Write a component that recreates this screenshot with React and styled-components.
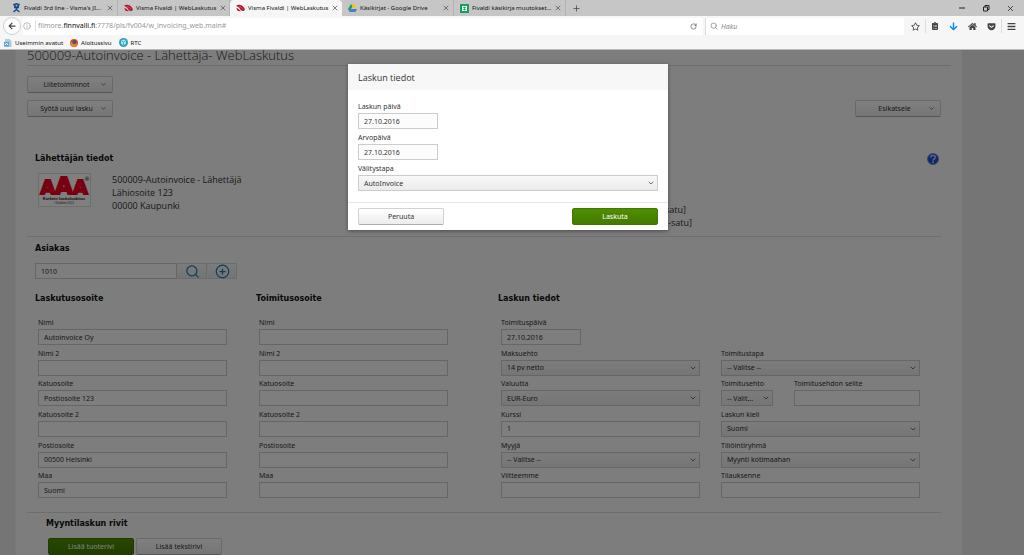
import React from "react";
import styled, { createGlobalStyle, css } from "styled-components";
import {
  FaArrowDown,
  FaArrowLeft,
  FaBars,
  FaClipboardList,
  FaGetPocket,
  FaHome,
  FaRegStar,
} from "react-icons/fa";
import { ChevronDown, CirclePlus, Info, Plus, RotateCw, Search, X } from "lucide-react";

const GlobalStyle = createGlobalStyle`
  * {
    box-sizing: border-box;
  }
  body {
    margin: 0;
    color: #333;
    font-family: "Open Sans", "Noto Sans", sans-serif;
    font-size: 8px;
  }
  button, input, select {
    margin: 0;
    font: inherit;
    color: inherit;
  }
  svg {
    display: block;
    flex: none;
  }
`;

const smallText = css`
  font-family: "Noto Sans", "Open Sans", sans-serif;
  font-size: 7px;
`;

/* browser */

const Window = styled.div`
  display: flex;
  flex-direction: column;
  height: 100vh;
  overflow: hidden;
`;

const TabStrip = styled.div`
  display: flex;
  align-items: stretch;
  height: 16px;
  padding-left: 6px;
  background: #c6c6c6;
  font-family: "Noto Sans", sans-serif;
  font-size: 6px;
  color: #111;
`;

const Tab = styled.div`
  display: flex;
  align-items: center;
  gap: 3px;
  width: 112px;
  padding: 0 3px 0 6px;
  border-right: 1px solid ${(p) => (p.$active ? "#f6f6f6" : "#b2b2b2")};
  ${(p) =>
    p.$active &&
    css`
      background: #f6f6f6;
      border-radius: 4px 4px 0 0;
    `}
`;

const TabTitle = styled.span`
  flex: 1;
  white-space: nowrap;
`;

const BareButton = styled.button`
  display: flex;
  align-items: center;
  justify-content: center;
  padding: 0;
  border: 0;
  background: none;
  color: ${(p) => p.$color || "#444"};
`;

const NewTab = styled(BareButton)`
  width: 20px;
`;

const WindowButtons = styled.div`
  display: flex;
  gap: 16px;
  margin-left: auto;
  padding-right: 9px;
`;

const Toolbar = styled.div`
  display: flex;
  align-items: center;
  gap: 2px;
  height: 20px;
  padding: 0 8px 0 3px;
  background: #f6f6f6;
`;

const BackButton = styled(BareButton)`
  width: 18px;
  height: 18px;
  border: 1px solid #d0d0d0;
  border-radius: 50%;
  background: #fcfcfc;
`;

const AddressBar = styled.div`
  display: flex;
  flex: 1;
  align-items: center;
  gap: 4px;
  height: 17px;
  padding-right: 6px;
  background: #fff;
`;

const Address = styled.span`
  flex: 1;
  padding-left: 2px;
  border-left: 1px solid #ddd;
  ${smallText}
  line-height: 10px;
  color: #999;
  b {
    font-weight: 400;
    color: #111;
  }
`;

const SearchBar = styled.label`
  display: flex;
  align-items: center;
  gap: 3px;
  width: 199px;
  height: 17px;
  padding-left: 4px;
  border-left: 1px solid #ddd;
  background: #fff;
  color: #777;
`;

const SearchInput = styled.input`
  width: 100%;
  padding: 0;
  border: 0;
  background: none;
  ${smallText}
  font-style: italic;
  &::placeholder {
    color: #888;
  }
`;

const Tools = styled.div`
  display: flex;
  align-items: center;
  gap: 10px;
  padding-left: 5px;
`;

const Divider = styled.span`
  width: 1px;
  height: 14px;
  margin: 0 -5px;
  background: #ddd;
`;

const Bookmarks = styled.nav`
  display: flex;
  gap: 7px;
  height: 14px;
  padding: 0 4px;
  border-bottom: 1px solid #bbb;
  background: #f6f6f6;
  font-family: "Noto Sans", sans-serif;
  font-size: 6px;
`;

const Bookmark = styled.a`
  display: flex;
  align-items: center;
  gap: 3px;
  color: #111;
  text-decoration: none;
`;

/* page */

const Viewport = styled.div`
  position: relative;
  flex: 1;
  min-height: 0;
  overflow: hidden;
  padding: 0 62px 0 15px;
  background: #ebebeb;
`;

const Sheet = styled.main`
  min-height: 100%;
  padding: 0 21px 0 11px;
  border-left: 1px solid #f2f2f2;
  background: #fafafa;
`;

const PageTitle = styled.h1`
  margin: 0 -10px 10px 0;
  padding-bottom: 4px;
  border-bottom: 1px solid #dcdcdc;
  font-size: 13px;
  font-weight: 300;
  line-height: 11px;
`;

const ButtonRow = styled.div`
  display: flex;
  justify-content: space-between;
  margin-bottom: 7px;
`;

const Button = styled.button`
  display: flex;
  align-items: center;
  justify-content: center;
  width: 86px;
  height: 17px;
  padding: 0 5px;
  border: 1px solid #d2d2d2;
  border-bottom-color: #aaa;
  border-radius: 2px;
  background: linear-gradient(#fff, #ececec);
  ${smallText}
  span {
    flex: 1;
  }
  ${(p) =>
    p.$primary &&
    css`
      border-color: #417505;
      background: linear-gradient(#4f8f00, #437a00);
      color: #fff;
    `}
`;

const Section = styled.section`
  padding: ${(p) => p.$pad || "0 8px"};
  border-bottom: 1px solid #dcdcdc;
`;

const Heading = styled.h2`
  margin: 0;
  font-family: "DejaVu Sans", sans-serif;
  font-size: 8px;
  font-weight: bold;
  line-height: 12px;
  color: #111;
`;

const SectionTop = styled.div`
  display: flex;
  align-items: center;
  justify-content: space-between;
  height: 16px;
  padding-right: 2px;
`;

const Sender = styled.div`
  display: flex;
  gap: 21px;
  padding: 6px 0 7px 3px;
`;

const SenderAddress = styled.p`
  flex: 1;
  margin: 0;
  font-size: 9px;
  line-height: 13px;
`;

const Reference = styled.p`
  width: 273px;
  margin: 0;
  padding-top: 30px;
  font-size: 9px;
  line-height: 13px;
  text-indent: -3px;
`;

const CustomerSearch = styled.div`
  display: flex;
  margin: 8px 0 14px;
  width: 202px;
`;

const IconButton = styled.button`
  display: flex;
  flex: none;
  align-items: center;
  justify-content: center;
  width: 30px;
  height: 16px;
  padding: 0;
  border: 1px solid #d8d8d8;
  border-left-color: #eee;
  background: linear-gradient(#f4f8fb, #e4eaee);
  color: #1f78ac;
`;

const Columns = styled.div`
  display: grid;
  grid-template-columns: 221fr 242fr 443fr;
`;

const FieldGrid = styled.div`
  display: grid;
  grid-template-columns: repeat(${(p) => p.$cols || 1}, 1fr);
  grid-template-rows: repeat(6, 1fr);
  grid-auto-flow: column;
  column-gap: 21px;
  height: 184px;
  margin-top: 11px;
  padding: 0 ${(p) => p.$right}px 0 3px;
`;

const Field = styled.div`
  display: flex;
  flex: ${(p) => p.$flex || "none"};
  flex-direction: column;
  width: ${(p) => p.$width || "auto"};
  min-width: 0;
`;

const Pair = styled.div`
  display: flex;
  gap: 21px;
`;

const Label = styled.label`
  ${smallText}
  line-height: 13px;
  white-space: nowrap;
`;

const controlStyle = css`
  width: 100%;
  height: 16px;
  padding: 0 5px;
  border: 1px solid #ccc;
  border-radius: 0;
  outline: 0;
  ${smallText}
`;

const Input = styled.input`
  ${controlStyle}
  background: #fcfcfc;
`;

const SelectBox = styled.div`
  display: grid;
  align-items: center;
  > * {
    grid-area: 1 / 1;
  }
  svg {
    justify-self: end;
    margin-right: 3px;
    pointer-events: none;
  }
`;

const StyledSelect = styled.select`
  ${controlStyle}
  appearance: none;
  background: linear-gradient(#f8f8f8, #ebebeb);
`;

const Rows = styled.section`
  padding: 5px 0 0 19px;
`;

const RowButtons = styled.div`
  display: flex;
  gap: 2px;
  padding: 8px 0 0 2px;
`;

/* dialog */

const Overlay = styled.div`
  position: absolute;
  inset: 0;
  display: flex;
  align-items: flex-start;
  justify-content: center;
  padding: 14px 8px 0 0;
  background: rgba(0, 0, 0, 0.5);
`;

const Dialog = styled.div`
  width: 320px;
  background: #fff;
  box-shadow: 0 1px 4px rgba(0, 0, 0, 0.4);
`;

const DialogTitle = styled.h2`
  margin: 0;
  padding: 1px 10px 0;
  background: #f7f7f7;
  font-size: 9px;
  font-weight: 400;
  line-height: 25px;
`;

const DialogBody = styled.div`
  display: flex;
  flex-direction: column;
  gap: 2px;
  padding: 10px 10px 11px;
`;

const DialogFooter = styled.div`
  display: flex;
  justify-content: space-between;
  padding: 5px 10px;
  border-top: 1px solid #e8e8e8;
`;

function TextField({ id, label, value = "", width, flex }) {
  return (
    <Field $width={width} $flex={flex}>
      <Label htmlFor={id}>{label}</Label>
      <Input id={id} defaultValue={value} />
    </Field>
  );
}

function SelectField({ id, label, value, width }) {
  return (
    <Field $width={width}>
      <Label htmlFor={id}>{label}</Label>
      <SelectBox>
        <StyledSelect id={id}>
          <option>{value}</option>
        </StyledSelect>
        <ChevronDown size={8} />
      </SelectBox>
    </Field>
  );
}

function MenuButton({ children }) {
  return (
    <Button type="button">
      <span>{children}</span>
      <ChevronDown size={7} />
    </Button>
  );
}

function JiraIcon() {
  return (
    <svg width="9" height="10" viewBox="0 0 18 20">
      <path d="M3 2l4 5h4l4-5M4 9h10M9 9v5M3 18l6-5 6 5" stroke="#174a85" strokeWidth="3" fill="none" />
      <circle cx="9" cy="5" r="5" fill="#174a85" />
      <circle cx="9" cy="5" r="2" fill="#8fb4dc" />
    </svg>
  );
}

function VismaIcon() {
  return (
    <svg width="9" height="8" viewBox="0 0 18 16">
      <path d="M0 4c4-4 11-3 15 2 4 4 3 8-1 8C8 14 9 6 0 4z" fill="#b3122c" />
      <path d="M1 8c4 0 5 5 9 6-4 2-9-1-9-6z" fill="#b3122c" />
      <path d="M6 5c4 0 6 3 8 6" stroke="#e8a0a8" strokeWidth="1" fill="none" />
    </svg>
  );
}

function DriveIcon() {
  return (
    <svg width="9" height="8" viewBox="0 0 18 16">
      <path d="M6 0h6l6 10h-6z" fill="#f9c513" />
      <path d="M6 0l3 5-6 11-3-6z" fill="#1ba15f" />
      <path d="M6 10h12l-3 6H3z" fill="#3c7ded" />
    </svg>
  );
}

function SheetsIcon() {
  return (
    <svg width="9" height="9" viewBox="0 0 18 18">
      <rect width="18" height="18" rx="1" fill="#12a05c" />
      <path d="M4 4h10v10H4z" fill="#fff" />
      <path d="M6 7h6M6 11h6M9 5v8" stroke="#12a05c" strokeWidth="1.5" />
    </svg>
  );
}

function BookmarkIcon({ kind }) {
  if (kind === "page") {
    return (
      <svg width="8" height="8" viewBox="0 0 16 16">
        <path d="M2 0h9l4 4v12H2z" fill="#a9cbe4" />
        <path d="M0 6h10v9H0z" fill="#5f9fce" />
        <path d="M2 12l3-4 3 4" stroke="#fff" strokeWidth="2" fill="none" />
      </svg>
    );
  }
  if (kind === "firefox") {
    return (
      <svg width="8" height="8" viewBox="0 0 16 16">
        <circle cx="8" cy="8" r="8" fill="#d9541e" />
        <circle cx="9" cy="6" r="4" fill="#35598f" />
        <path d="M1 5c3 1 3 6 8 6 3 0 4-2 5-4 1 6-3 9-7 8-4 0-7-5-6-10z" fill="#f08a24" />
      </svg>
    );
  }
  return (
    <svg width="9" height="9" viewBox="0 0 18 18">
      <circle cx="9" cy="9" r="9" fill="#2aa3bd" />
      <path d="M4 5l5-2 5 2v6l-5 4-5-4z" fill="#b9e6ee" />
      <path d="M4 5l5 3 5-3M9 8v7" stroke="#2aa3bd" strokeWidth="1.5" fill="none" />
    </svg>
  );
}

function AaaLogo() {
  return (
    <svg width="53" height="34" viewBox="0 0 53 34">
      <rect x=".5" y=".5" width="52" height="33" fill="#fff" stroke="#ddd" />
      <text
        x="26"
        y="21"
        fontSize="19"
        fill="#f00020"
        stroke="#f00020"
        strokeWidth="2"
        fontFamily="DejaVu Sans"
        fontWeight="bold"
        textAnchor="middle"
      >
        A<tspan fontSize="23">A</tspan>A
      </text>
      <text x="46" y="8" fontSize="6" fontFamily="DejaVu Sans" fill="#222">®</text>
      <text x="26" y="27" fontSize="4" fontFamily="Liberation Sans" fontWeight="bold" textAnchor="middle" fill="#111">
        Korkein luottoluokitus
      </text>
      <text x="26" y="31" fontSize="3" fontFamily="Liberation Sans" textAnchor="middle" fill="#333">
        ©Soliditet 2011
      </text>
    </svg>
  );
}

function HelpIcon() {
  return (
    <svg width="12" height="12" viewBox="0 0 26 26">
      <circle cx="13" cy="13" r="12" fill="#1d50d8" stroke="#7f95c8" strokeWidth="2" />
      <path d="M8 10c0-7 11-6 10 0-1 3-5 3-5 7" stroke="#c8d4f4" strokeWidth="3" fill="none" />
      <circle cx="13" cy="20" r="2" fill="#c8d4f4" />
    </svg>
  );
}

const tabs = [
  { title: "Fivaldi 3rd line - Visma's JI...", icon: <JiraIcon /> },
  { title: "Visma Fivaldi | WebLaskutus", icon: <VismaIcon /> },
  { title: "Visma Fivaldi | WebLaskutus", icon: <VismaIcon />, active: true },
  { title: "Käsikirjat - Google Drive", icon: <DriveIcon /> },
  { title: "Fivaldi käsikirja muutokset...", icon: <SheetsIcon /> },
];

const addressLabels = ["Nimi", "Nimi 2", "Katuosoite", "Katuosoite 2", "Postiosoite", "Maa"];
const billing = ["Autoinvoice Oy", "", "Postiosoite 123", "", "00500 Helsinki", "Suomi"];

function Browser() {
  return (
    <header>
      <TabStrip>
        {tabs.map((tab, i) => (
          <Tab key={i} $active={tab.active}>
            {tab.icon}
            <TabTitle>{tab.title}</TabTitle>
            <BareButton type="button" aria-label="Sulje välilehti">
              <X size={8} />
            </BareButton>
          </Tab>
        ))}
        <NewTab type="button" aria-label="Uusi välilehti">
          <Plus size={9} />
        </NewTab>
        <WindowButtons>
          <BareButton type="button" aria-label="Pienennä">
            <svg width="8" height="8" viewBox="0 0 8 8">
              <path d="M1 4h6" stroke="#222" />
            </svg>
          </BareButton>
          <BareButton type="button" aria-label="Palauta">
            <svg width="8" height="8" viewBox="0 0 8 8">
              <path d="M1.500 3h4v4h-4zM3 3V1.500h4v4H5.500" stroke="#222" fill="none" />
            </svg>
          </BareButton>
          <BareButton type="button" aria-label="Sulje">
            <X size={9} color="#222" />
          </BareButton>
        </WindowButtons>
      </TabStrip>
      <Toolbar>
        <BackButton type="button" aria-label="Takaisin">
          <FaArrowLeft size={8} />
        </BackButton>
        <AddressBar>
          <Info size={8} color="#999" />
          <Address>
            filmore.<b>finnvalli.fi</b>:7778/pls/fv004/w_invoicing_web.main#
          </Address>
          <BareButton type="button" aria-label="Lataa uudelleen">
            <RotateCw size={7} />
          </BareButton>
        </AddressBar>
        <SearchBar>
          <Search size={8} />
          <SearchInput placeholder="Haku" aria-label="Haku" />
        </SearchBar>
        <Tools>
          <BareButton type="button" aria-label="Lisää kirjanmerkki">
            <FaRegStar size={9} />
          </BareButton>
          <Divider />
          <BareButton type="button" aria-label="Kirjanmerkit">
            <FaClipboardList size={8} />
          </BareButton>
          <BareButton type="button" aria-label="Lataukset" $color="#0a84ff">
            <FaArrowDown size={9} />
          </BareButton>
          <BareButton type="button" aria-label="Koti">
            <FaHome size={9} />
          </BareButton>
          <BareButton type="button" aria-label="Pocket">
            <FaGetPocket size={9} />
          </BareButton>
          <Divider />
          <BareButton type="button" aria-label="Valikko">
            <FaBars size={9} />
          </BareButton>
        </Tools>
      </Toolbar>
      <Bookmarks>
        <Bookmark href="#">
          <BookmarkIcon kind="page" />
          Useimmin avatut
        </Bookmark>
        <Bookmark href="#">
          <BookmarkIcon kind="firefox" />
          Aloitussivu
        </Bookmark>
        <Bookmark href="#">
          <BookmarkIcon kind="rtc" />
          RTC
        </Bookmark>
      </Bookmarks>
    </header>
  );
}

function InvoicePage() {
  return (
    <Sheet>
      <PageTitle>500009-Autoinvoice - Lähettäjä- WebLaskutus</PageTitle>
      <ButtonRow>
        <MenuButton>Liitetoiminnot</MenuButton>
      </ButtonRow>
      <ButtonRow>
        <MenuButton>Syötä uusi lasku</MenuButton>
        <MenuButton>Esikatsele</MenuButton>
      </ButtonRow>
      <Section $pad="27px 0 0 8px">
        <SectionTop>
          <Heading>Lähettäjän tiedot</Heading>
          <BareButton type="button" aria-label="Ohje">
            <HelpIcon />
          </BareButton>
        </SectionTop>
        <Sender>
          <AaaLogo />
          <SenderAddress>
            500009-Autoinvoice - Lähettäjä
            <br />
            Lähiosoite 123
            <br />
            00000 Kaupunki
          </SenderAddress>
          <Reference>
            satu]
            <br />
            -satu]
          </Reference>
        </Sender>
      </Section>
      <Section $pad="6px 0 12px 8px">
        <Heading>Asiakas</Heading>
        <CustomerSearch>
          <Input defaultValue="1010" aria-label="Asiakas" />
          <IconButton type="button" aria-label="Hae asiakas">
            <Search size={15} strokeWidth={2} />
          </IconButton>
          <IconButton type="button" aria-label="Lisää asiakas">
            <CirclePlus size={15} strokeWidth={2} />
          </IconButton>
        </CustomerSearch>
        <Columns>
          <div>
            <Heading>Laskutusosoite</Heading>
            <FieldGrid $right={29}>
              {addressLabels.map((label, i) => (
                <TextField key={label} id={`billing-${i}`} label={label} value={billing[i]} />
              ))}
            </FieldGrid>
          </div>
          <div>
            <Heading>Toimitusosoite</Heading>
            <FieldGrid $right={50}>
              {addressLabels.map((label, i) => (
                <TextField key={label} id={`delivery-${i}`} label={label} />
              ))}
            </FieldGrid>
          </div>
          <div>
            <Heading>Laskun tiedot</Heading>
            <FieldGrid $cols={2} $right={21}>
              <TextField id="delivery-date" label="Toimituspäivä" value="27.10.2016" width="80px" />
              <SelectField id="terms" label="Maksuehto" value="14 pv netto" />
              <SelectField id="currency" label="Valuutta" value="EUR-Euro" />
              <TextField id="rate" label="Kurssi" value="1" />
              <SelectField id="seller" label="Myyjä" value="-- Valitse --" />
              <TextField id="our-ref" label="Viitteemme" />
              <div />
              <SelectField id="delivery-method" label="Toimitustapa" value="-- Valitse --" />
              <Pair>
                <SelectField id="delivery-term" label="Toimitusehto" value="-- Valit..." width="52px" />
                <TextField id="term-text" label="Toimitusehdon selite" flex="1" />
              </Pair>
              <SelectField id="language" label="Laskun kieli" value="Suomi" />
              <SelectField id="posting" label="Tiliöintiryhmä" value="Myynti kotimaahan" />
              <TextField id="order" label="Tilauksenne" />
            </FieldGrid>
          </div>
        </Columns>
      </Section>
      <Rows>
        <Heading>Myyntilaskun rivit</Heading>
        <RowButtons>
          <Button type="button" $primary>
            Lisää tuoterivi
          </Button>
          <Button type="button">Lisää tekstirivi</Button>
        </RowButtons>
      </Rows>
    </Sheet>
  );
}

function InvoiceDialog() {
  return (
    <Overlay>
      <Dialog role="dialog" aria-labelledby="dialog-title">
        <DialogTitle id="dialog-title">Laskun tiedot</DialogTitle>
        <DialogBody>
          <TextField id="invoice-date" label="Laskun päivä" value="27.10.2016" width="80px" />
          <TextField id="value-date" label="Arvopäivä" value="27.10.2016" width="80px" />
          <SelectField id="channel" label="Välitystapa" value="AutoInvoice" />
        </DialogBody>
        <DialogFooter>
          <Button type="button">Peruuta</Button>
          <Button type="button" $primary>
            Laskuta
          </Button>
        </DialogFooter>
      </Dialog>
    </Overlay>
  );
}

function App() {
  return (
    <>
      <GlobalStyle />
      <Window>
        <Browser />
        <Viewport>
          <InvoicePage />
          <InvoiceDialog />
        </Viewport>
      </Window>
    </>
  );
}

export default App;
